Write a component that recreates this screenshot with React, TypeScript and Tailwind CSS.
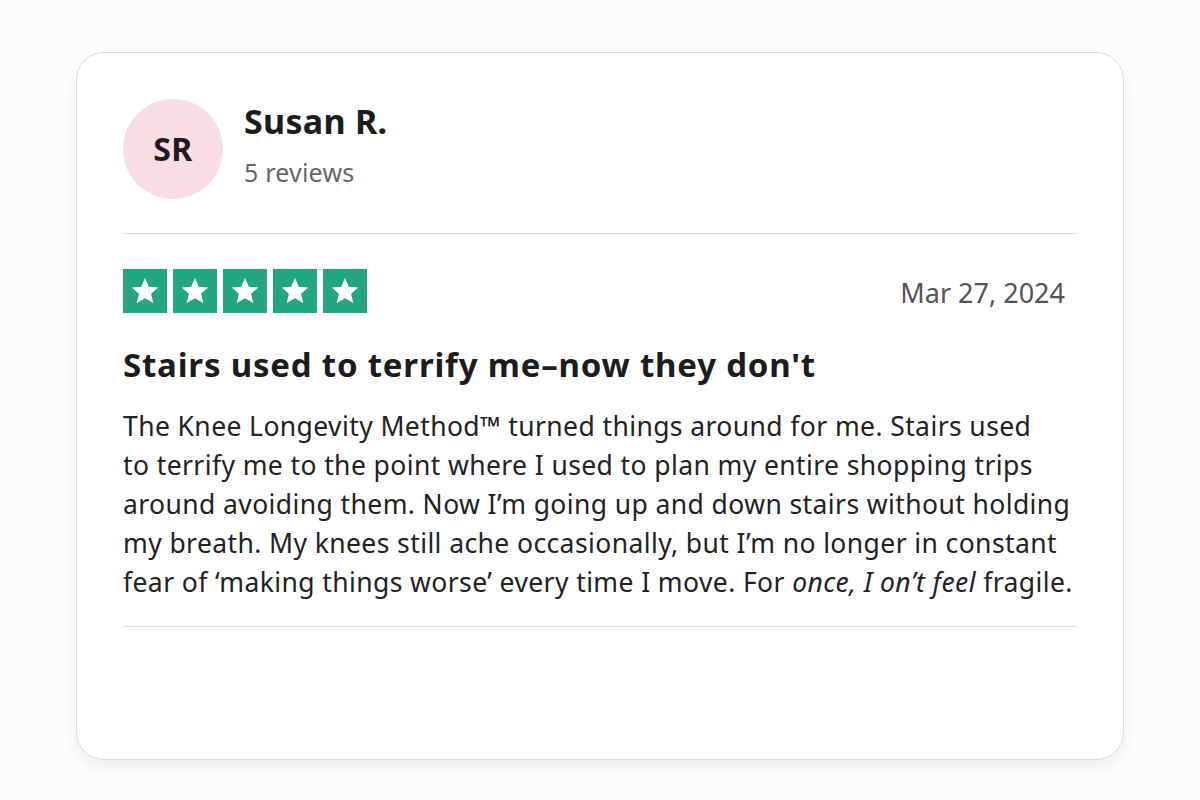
const Stars = () => (
  <div className="flex gap-[6px]">
    {[1, 2, 3, 4, 5].map((s) => (
      <div key={s} className="w-[44px] h-[44px] bg-[#22a67f] flex items-center justify-center">
        <svg width="32" height="32" viewBox="0 0 24 24">
          <path
            d="M12 2.2l2.85 6.55 7.1.62-5.38 4.7 1.6 6.98L12 17.4l-6.17 3.65 1.6-6.98-5.38-4.7 7.1-.62z"
            fill="#ffffff"
          />
        </svg>
      </div>
    ))}
  </div>
);

const App = () => {
  return (
    <div className="w-[1200px] h-[800px] bg-[#fcfcfd] pt-[52px] pl-[76px] font-['Noto_Sans',sans-serif]">
      <div className="w-[1048px] h-[708px] bg-white rounded-[28px] border border-[#d9dbe1] shadow-[0_8px_16px_rgba(0,0,0,0.06)] px-[46px] pt-[46px]">
        <div className="flex items-start gap-[21px] pb-[34px] border-b border-[#dcdee3]">
          <div className="w-[100px] h-[100px] rounded-full bg-[#f9dde5] flex items-center justify-center">
            <span className="text-[32px] font-bold text-[#1f1a1d] tracking-[0.5px]">SR</span>
          </div>
          <div className="flex flex-col mt-[1px]">
            <div className="text-[34px] font-bold text-[#1c1c1c] leading-[42px] tracking-[0.3px]">Susan R.</div>
            <div className="text-[25px] text-[#666] leading-[32px] mt-[14px] tracking-[0.2px]">5 reviews</div>
          </div>
        </div>

        <div className="flex items-center justify-between mt-[35px] pr-[12px]">
          <Stars />
          <div className="text-[27px] text-[#555] mt-[4px]">Mar 27, 2024</div>
        </div>

        <h2 className="mt-[29px] text-[33px] font-bold text-[#1c1c1c] leading-[44px] tracking-[0.8px]">
          Stairs used to terrify me–now they don't
        </h2>

        <p className="mt-[20px] text-[26.5px] text-[#222] leading-[39px] tracking-[0.4px] pb-[24px] border-b border-[#dcdee3] whitespace-nowrap">
          The Knee Longevity Method™ turned things around for me. Stairs used
          <br />
          to terrify me to the point where I used to plan my entire shopping trips
          <br />
          around avoiding them. Now I’m going up and down stairs without holding
          <br />
          my breath. My knees still ache occasionally, but I’m no longer in constant
          <br />
          fear of ‘making things worse’ every time I move. For <em>once, I on’t feel</em> fragile.
        </p>
      </div>
    </div>
  );
};

export default App;
